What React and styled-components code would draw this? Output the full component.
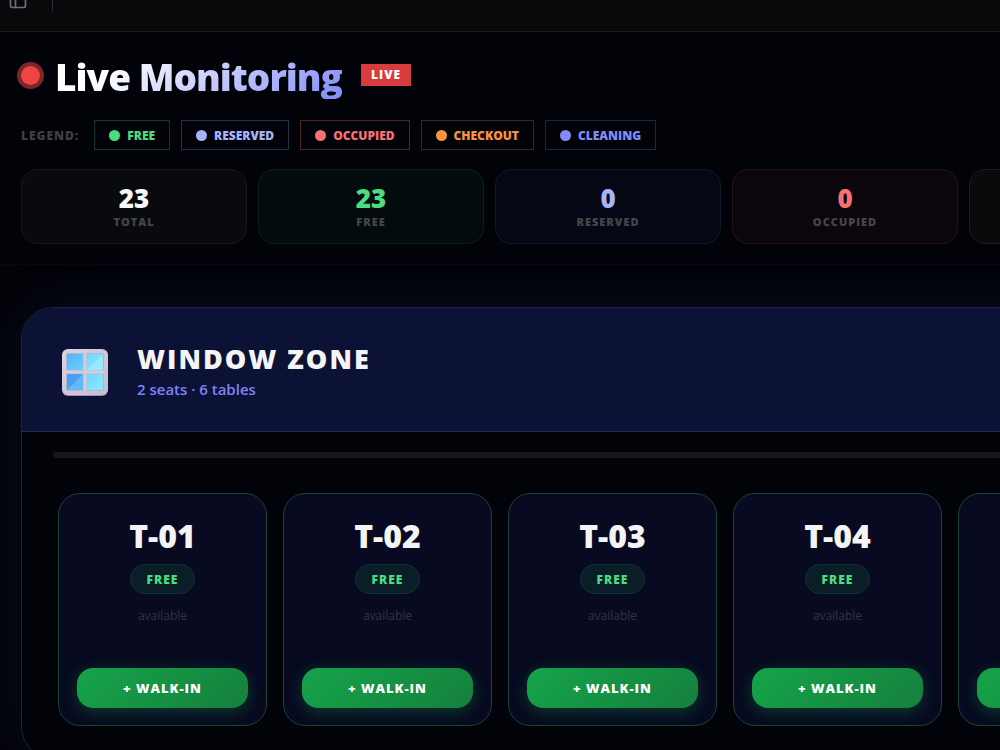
import React from 'react';
import styled, { createGlobalStyle } from 'styled-components';
import { PanelLeft } from 'lucide-react';

const STATUSES = [
  { label: 'Free', color: '#4ade80', edge: '#4ade8040' },
  { label: 'Reserved', color: '#a5b4fc', edge: '#a5b4fc40' },
  { label: 'Occupied', color: '#f87171', edge: '#f8717150' },
  { label: 'Checkout', color: '#fb923c', edge: '#fb923c40' },
  { label: 'Cleaning', color: '#818cf8', edge: '#818cf840' },
];

const STATS = [
  { label: 'Total', value: 23, color: '#f8f8f8', bg: '#090a0e', edge: '#17181c' },
  { label: 'Free', value: 23, color: '#4ade80', bg: '#030b0d', edge: '#0c201b' },
  { label: 'Reserved', value: 0, color: '#a5b4fc', bg: '#050814', edge: '#141828' },
  { label: 'Occupied', value: 0, color: '#f87171', bg: '#0b060c', edge: '#241419' },
  { label: 'Checkout', value: 0, color: '#fb923c', bg: '#0b090b', edge: '#241a13' },
];

const TABLES = ['T-01', 'T-02', 'T-03', 'T-04', 'T-05', 'T-06'];

const WindowIcon = () => (
  <svg width="48" height="48" viewBox="0 0 48 48" aria-hidden="true">
    <defs>
      <linearGradient id="frame" x1="0" y1="0" x2="1" y2="1">
        <stop offset="0" stopColor="#d9d3e2" />
        <stop offset="1" stopColor="#c5bdd2" />
      </linearGradient>
      <linearGradient id="paneA" x1="0" y1="0" x2="1" y2="1">
        <stop offset="0" stopColor="#4fb4f6" />
        <stop offset="1" stopColor="#6bd2fb" />
      </linearGradient>
      <linearGradient id="paneB" x1="0" y1="0" x2="1" y2="1">
        <stop offset="0" stopColor="#6bd8fc" />
        <stop offset="1" stopColor="#8eeaff" />
      </linearGradient>
    </defs>
    <rect x="1" y="2" width="46" height="46" rx="6" fill="#9d90a8" />
    <rect x="1" y="1" width="46" height="46" rx="6" fill="url(#frame)" />
    <rect x="5" y="5" width="38" height="38" rx="2" fill="#b5b2cb" />
    <path d="M24 5v38M5 24h38" stroke="#d3cede" strokeWidth="3" />
    <rect x="6" y="6" width="16" height="16" rx="1" fill="url(#paneA)" />
    <rect x="26" y="6" width="16" height="16" rx="1" fill="url(#paneB)" />
    <path d="M42 6v15a1 1 0 0 1-1 1H26z" fill="#97e9ff" />
    <rect x="6" y="26" width="16" height="16" rx="1" fill="#4a9ff5" />
    <path d="M22 26v15a1 1 0 0 1-1 1H6z" fill="#62bafa" />
    <rect x="26" y="26" width="16" height="16" rx="1" fill="url(#paneB)" />
  </svg>
);

const App = () => (
  <>
    <GlobalStyle />
    <TopBar>
      <IconButton type="button" aria-label="Toggle sidebar">
        <PanelLeft size={20} strokeWidth={2} />
      </IconButton>
      <Divider />
    </TopBar>

    <Header>
      <TitleRow>
        <Pulse />
        <Title>Live Monitoring</Title>
        <LiveBadge>LIVE</LiveBadge>
      </TitleRow>
      <Legend>
        <LegendLabel>Legend:</LegendLabel>
        {STATUSES.map(({ label, color, edge }) => (
          <Chip key={label} $color={color} $edge={edge}>
            {label}
          </Chip>
        ))}
      </Legend>
      <Stats>
        {STATS.map(({ label, value, color, bg, edge }) => (
          <Stat key={label} $bg={bg} $edge={edge}>
            <StatValue $color={color}>{value}</StatValue>
            <StatLabel>{label}</StatLabel>
          </Stat>
        ))}
      </Stats>
    </Header>

    <Main>
      <Zone>
        <ZoneHeader>
          <WindowIcon />
          <div>
            <ZoneTitle>Window Zone</ZoneTitle>
            <ZoneMeta>2 seats · 6 tables</ZoneMeta>
          </div>
        </ZoneHeader>
        <ZoneBody>
          <Track />
          <Tables>
            {TABLES.map((name) => (
              <TableCard key={name}>
                <TableName>{name}</TableName>
                <TableStatus>Free</TableStatus>
                <TableNote>available</TableNote>
                <WalkIn type="button">+ Walk-in</WalkIn>
              </TableCard>
            ))}
          </Tables>
        </ZoneBody>
      </Zone>
    </Main>
  </>
);

const GlobalStyle = createGlobalStyle`
  * {
    box-sizing: border-box;
  }
  html {
    overflow: hidden;
  }
  body {
    margin: 0;
    background: #020308;
    color: #f4f4f5;
    font-family: 'Open Sans', 'Noto Sans', sans-serif;
    overflow: hidden;
  }
  h1, h2, h3, p {
    margin: 0;
  }
`;

const TopBar = styled.div`
  display: flex;
  align-items: center;
  gap: 24px;
  height: 64px;
  margin-top: -32px;
  padding: 0 8px;
  background: #09090b;
  border-bottom: 1px solid #1c1c1f;
`;

const IconButton = styled.button`
  display: flex;
  padding: 0;
  border: 0;
  background: none;
  color: #71717a;
`;

const Divider = styled.span`
  width: 1px;
  height: 22px;
  background: #303034;
`;

const Header = styled.header`
  padding: 23px 0 20px 21px;
  border-bottom: 1px solid #060915;
  overflow: hidden;
`;

const TitleRow = styled.div`
  display: flex;
  align-items: center;
  gap: 15px;
  height: 44px;
`;

const Pulse = styled.span`
  width: 19px;
  height: 19px;
  margin-bottom: 4px;
  border-radius: 50%;
  background: #ef4444;
  box-shadow: 0 0 0 4px #7b2629;
`;

const Title = styled.h1`
  margin-right: 4px;
  font-size: 37px;
  line-height: 44px;
  font-weight: 800;
  letter-spacing: -1px;
  color: transparent;
  background: linear-gradient(135deg, #fff 20%, #818cf8 100%);
  background-clip: text;
`;

const LiveBadge = styled.span`
  height: 22px;
  margin-bottom: 4px;
  padding: 0 10px;
  background: #d93c3d;
  color: #fff;
  font-size: 12px;
  line-height: 22px;
  font-weight: 800;
  letter-spacing: 1px;
`;

const Legend = styled.div`
  display: flex;
  align-items: center;
  gap: 11px;
  margin-top: 21px;
`;

const LegendLabel = styled.span`
  margin-right: 4px;
  color: #3f3f46;
  font-size: 12px;
  font-weight: 800;
  letter-spacing: 1px;
  text-transform: uppercase;
`;

const Chip = styled.span`
  display: flex;
  align-items: center;
  gap: 7px;
  height: 30px;
  padding: 0 14px;
  border: 1px solid ${({ $edge }) => $edge};
  color: ${({ $color }) => $color};
  font-size: 12px;
  font-weight: 800;
  text-transform: uppercase;

  &::before {
    content: '';
    width: 11px;
    height: 11px;
    border-radius: 50%;
    background: ${({ $color }) => $color};
  }
`;

const Stats = styled.div`
  display: grid;
  grid-auto-flow: column;
  grid-auto-columns: 226px;
  gap: 11px;
  margin-top: 19px;
`;

const Stat = styled.div`
  padding: 12px 0 13px;
  border: 1px solid ${({ $edge }) => $edge};
  border-radius: 16px;
  background: ${({ $bg }) => $bg};
  text-align: center;
`;

const StatValue = styled.div`
  color: ${({ $color }) => $color};
  font-size: 26px;
  line-height: 32px;
  font-weight: 800;
`;

const StatLabel = styled.div`
  color: #45464b;
  font-size: 11px;
  line-height: 16px;
  font-weight: 800;
  letter-spacing: 1px;
  text-transform: uppercase;
`;

const Main = styled.main`
  padding: 42px 0 42px 21px;
  overflow: hidden;
`;

const Zone = styled.section`
  width: max-content;
  min-width: 100%;
  border: 1px solid #1d2150;
  border-radius: 32px;
  background: #020308;
  box-shadow: 0 0 60px #6366f118;
  overflow: hidden;
`;

const ZoneHeader = styled.div`
  display: flex;
  align-items: center;
  gap: 28px;
  height: 124px;
  padding: 4px 39px 0;
  background: #0c1235;
  border-bottom: 1px solid #262b5c;
`;

const ZoneTitle = styled.h2`
  font-size: 27px;
  line-height: 34px;
  font-weight: 800;
  letter-spacing: 2px;
  text-transform: uppercase;
`;

const ZoneMeta = styled.p`
  color: #7c83f5;
  font-size: 15px;
  line-height: 26px;
  font-weight: 600;
`;

const ZoneBody = styled.div`
  padding: 20px 31px 32px;
`;

const Track = styled.div`
  height: 6px;
  border-radius: 3px;
  background: #18181b;
`;

const Tables = styled.div`
  display: grid;
  grid-auto-flow: column;
  grid-auto-columns: 209px;
  gap: 16px;
  padding: 35px 5px 0;
`;

const TableCard = styled.article`
  display: flex;
  flex-direction: column;
  align-items: center;
  height: 233px;
  padding: 20px 18px 17px;
  border: 1px solid #17443b;
  border-radius: 22px;
  background: #070a20;
  overflow: hidden;
`;

const TableName = styled.h3`
  font-size: 32px;
  line-height: 44px;
  font-weight: 800;
`;

const TableStatus = styled.span`
  height: 30px;
  margin-top: 6px;
  padding: 0 16px;
  border: 1px solid #12352f;
  border-radius: 15px;
  background: #0a1e28;
  color: #4ade80;
  font-size: 12px;
  line-height: 30px;
  font-weight: 800;
  letter-spacing: 1px;
  text-transform: uppercase;
`;

const TableNote = styled.p`
  margin-top: 12px;
  color: #34353f;
  font-size: 12px;
  line-height: 20px;
`;

const WalkIn = styled.button`
  align-self: stretch;
  height: 40px;
  margin-top: auto;
  padding: 0;
  border: 0;
  border-radius: 16px;
  background: linear-gradient(135deg, #16a34a, #15803d);
  box-shadow: 0 4px 16px #16a34a50;
  color: #fff;
  font: inherit;
  font-size: 13px;
  font-weight: 800;
  letter-spacing: 1px;
  text-transform: uppercase;
`;

export default App;
